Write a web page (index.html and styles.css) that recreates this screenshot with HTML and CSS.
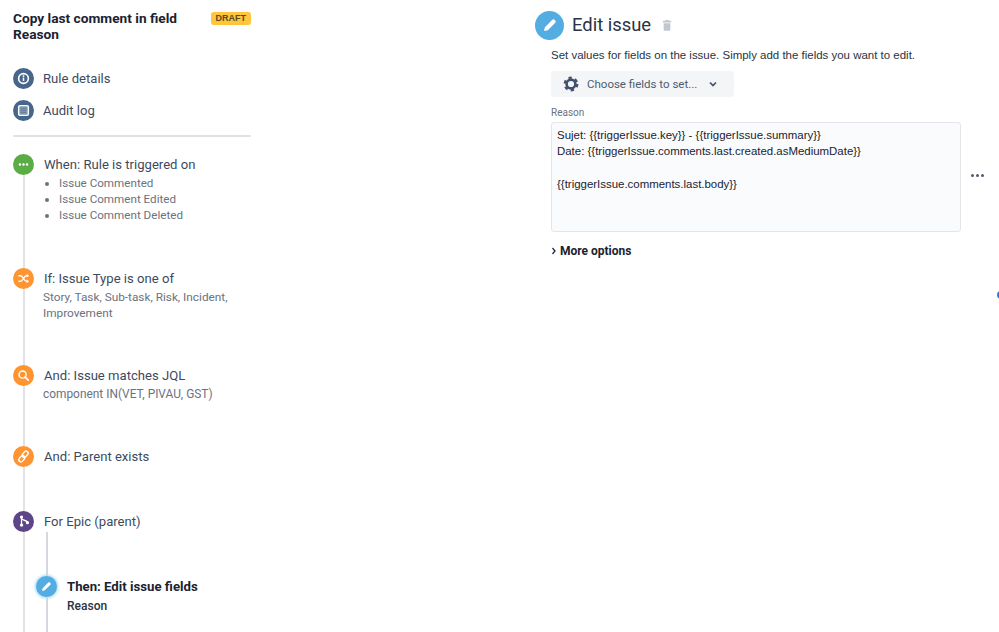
FILE: index.html
```html
<!DOCTYPE html>
<html lang="en">
<head>
<meta charset="utf-8">
<title>Copy last comment in field Reason</title>
<link rel="stylesheet" href="styles.css">
</head>
<body>
<div class="page">
  <aside class="sidebar">
    <header class="rule-head">
      <h1 class="rule-title">Copy last comment in field Reason</h1>
      <span class="lozenge">DRAFT</span>
    </header>
    <nav class="rule-nav">
      <div class="nav-item">
        <span class="dot dot-slate"><svg viewBox="0 0 16 16" class="ico"><circle cx="8" cy="8" r="5.2" fill="none" stroke="#fff" stroke-width="1.7"/><rect x="7.2" y="7" width="1.6" height="3.6" fill="#fff"/><circle cx="8" cy="5.4" r="1" fill="#fff"/></svg></span>
        <span>Rule details</span>
      </div>
      <div class="nav-item">
        <span class="dot dot-slate"><svg viewBox="0 0 16 16" class="ico"><rect x="2.800" y="2.800" width="10.400" height="10.400" rx="1.500" fill="#ffffff55" stroke="#fff" stroke-width="1.500"/><path d="M5 6h6M5 8h6M5 10h6" stroke="#46668c" stroke-width=".8" opacity=".7"/></svg></span>
        <span>Audit log</span>
      </div>
    </nav>
    <div class="timeline">
      <section class="step step-when">
        <div class="rail"><span class="dot dot-green"><svg viewBox="0 0 16 16" class="ico"><circle cx="4.200" cy="8" r="1.300" fill="#fff"/><circle cx="8" cy="8" r="1.300" fill="#fff"/><circle cx="11.800" cy="8" r="1.300" fill="#fff"/></svg></span><span class="line"></span></div>
        <div class="body">
          <div class="step-title">When: Rule is triggered on</div>
          <ul class="triggers">
            <li>Issue Commented</li>
            <li>Issue Comment Edited</li>
            <li>Issue Comment Deleted</li>
          </ul>
        </div>
      </section>
      <section class="step step-if">
        <div class="rail"><span class="dot dot-orange"><svg viewBox="0 0 16 16" class="ico"><path d="M2.500 5h2.400c2.600 0 3.600 6 6.200 6h1.600M2.500 11h2.400c2.600 0 3.600-6 6.200-6h1.600" fill="none" stroke="#fff" stroke-width="1.500"/><path d="M11.400 3l2.600 2-2.600 2zM11.400 9l2.600 2-2.600 2z" fill="#fff"/></svg></span><span class="line"></span></div>
        <div class="body">
          <div class="step-title">If: Issue Type is one of</div>
          <p class="step-sub step-sub-wrap">Story, Task, Sub-task, Risk, Incident, Improvement</p>
        </div>
      </section>
      <section class="step step-jql">
        <div class="rail"><span class="dot dot-orange"><svg viewBox="0 0 16 16" class="ico"><circle cx="7" cy="7" r="3.800" fill="none" stroke="#fff" stroke-width="1.500"/><path d="M9.800 9.800l3.200 3.200" stroke="#fff" stroke-width="2" stroke-linecap="round"/></svg></span><span class="line"></span></div>
        <div class="body">
          <div class="step-title">And: Issue matches JQL</div>
          <p class="step-sub">component IN(VET, PIVAU, GST)</p>
        </div>
      </section>
      <section class="step step-parent">
        <div class="rail"><span class="dot dot-orange"><svg viewBox="0 0 16 16" class="ico"><g fill="none" stroke="#fff" stroke-width="1.500"><rect x="7.600" y="1.900" width="4.400" height="7.400" rx="2.200" transform="rotate(40 9.800 5.600)"/><rect x="4" y="6.700" width="4.400" height="7.400" rx="2.200" transform="rotate(40 6.200 10.400)"/></g></svg></span><span class="line"></span></div>
        <div class="body">
          <div class="step-title">And: Parent exists</div>
        </div>
      </section>
      <section class="step step-branch">
        <div class="rail"><span class="dot dot-purple"><svg viewBox="0 0 16 16" class="ico"><path d="M5.900 3.300v8.200M5.900 4.500c.3 2.800 5.400 1.500 6.300 4.500" fill="none" stroke="#fff" stroke-width="1.400"/><circle cx="5.900" cy="3.300" r="1.700" fill="#fff"/><circle cx="5.900" cy="11.800" r="1.800" fill="#fff"/><circle cx="12.200" cy="9.200" r="1.700" fill="#fff"/></svg></span><span class="line"></span></div>
        <div class="body">
          <div class="step-title">For Epic (parent)</div>
          <div class="nested">
            <div class="nested-line"></div>
            <div class="step step-then">
              <div class="rail"><span class="dot dot-blue dot-active"><svg viewBox="0 0 16 16" class="ico"><path d="M3.200 12.800l.7-3 6-6a1.200 1.200 0 0 1 1.700 0l.6.6a1.200 1.200 0 0 1 0 1.700l-6 6z" fill="#fff"/></svg></span><span class="line line-thin"></span></div>
              <div class="body then-body">
                <div class="then-title">Then: Edit issue fields</div>
                <div class="then-sub">Reason</div>
              </div>
            </div>
          </div>
        </div>
      </section>
    </div>
  </aside>

  <main class="panel">
    <header class="panel-head">
      <span class="panel-icon"><svg viewBox="0 0 16 16" class="panel-ico"><path d="M3.200 12.800l.7-3 6-6a1.200 1.200 0 0 1 1.700 0l.6.6a1.200 1.200 0 0 1 0 1.700l-6 6z" fill="#fff"/></svg></span>
      <h2 class="panel-title">Edit issue</h2>
      <svg viewBox="0 0 12 14" class="trash"><path d="M4 1h4v1h3v2H1V2h3zM2 5h8v8a1 1 0 0 1-1 1H3a1 1 0 0 1-1-1z" fill="#c1c7d0"/></svg>
    </header>
    <div class="panel-body">
      <p class="panel-desc">Set values for fields on the issue. Simply add the fields you want to edit.</p>
      <div class="choose">
        <svg viewBox="0 0 16 16" class="gear"><circle cx="8" cy="8" r="4.400" fill="none" stroke="#42526e" stroke-width="2.600"/><circle cx="8" cy="8" r="6.300" fill="none" stroke="#42526e" stroke-width="2.200" stroke-dasharray="3.300 3.300"/></svg>
        <span>Choose fields to set...</span>
        <svg viewBox="0 0 10 10" class="chev"><path d="M2 3.500l3 3 3-3" fill="none" stroke="#42526e" stroke-width="1.700"/></svg>
      </div>
      <label class="field-label">Reason</label>
      <div class="field-row">
        <div class="textarea">Sujet: {{triggerIssue.key}} - {{triggerIssue.summary}}
Date: {{triggerIssue.comments.last.created.asMediumDate}}

{{triggerIssue.comments.last.body}}</div>
        <span class="more-dots"><i></i><i></i><i></i></span>
      </div>
      <div class="more-options">
        <svg viewBox="0 0 6 8" class="more-chev"><path d="M1.500 1l2.500 3-2.500 3" fill="none" stroke="#172b4d" stroke-width="1.300"/></svg>
        <span>More options</span>
      </div>
    </div>
  </main>
  <span class="edge-dot"></span>
</div>
</body>
</html>
```
FILE: styles.css
```css
* { box-sizing: border-box; }
html, body { margin: 0; padding: 0; height: 100%; overflow: hidden; background: #fff; }
body { font-family: Roboto, "Liberation Sans", sans-serif; color: #172b4d; }

.page { position: relative; display: flex; height: 632px; overflow: hidden; }

.sidebar { width: 238px; margin-left: 13px; flex: none; display: flex; flex-direction: column; }

.rule-head { display: flex; justify-content: space-between; align-items: flex-start; padding-top: 10px; }
.rule-title { margin: 0; width: 180px; font-size: 13.700px; line-height: 16px; font-weight: 700; color: #1b2230; }
.lozenge { margin-top: 2px; padding: 0 5px; height: 13px; background: #ffc53d; border-radius: 3px; color: #5a4a1c; font: 700 9px/13px "Liberation Sans", sans-serif; }

.rule-nav { margin-top: 26px; padding-bottom: 14px; border-bottom: 2px solid #dfe1e6; display: flex; flex-direction: column; gap: 11px; }
.nav-item { display: flex; align-items: center; gap: 9px; font-size: 13.100px; color: #3d4a5e; height: 21px; }

.dot { width: 21px; height: 21px; border-radius: 50%; display: flex; align-items: center; justify-content: center; flex: none; }
.ico { width: 15px; height: 15px; display: block; }
.dot-slate { background: #46668c; }
.dot-green { background: #5aac44; }
.dot-orange { background: #ff9431; }
.dot-purple { background: #5e4587; }
.dot-blue { background: #53ade2; }
.dot-active { box-shadow: 0 0 3px 1px #a9d8f5; }

.timeline { margin-top: 17px; display: flex; flex-direction: column; }
.step { display: flex; gap: 10px; }
.rail { width: 21px; flex: none; display: flex; flex-direction: column; align-items: center; }
.line { flex: 1; width: 2px; background: #e2e3e6; }
.line-thin { background: #d5d8de; }
.body { flex: 1; min-width: 0; }
.step-title { font-size: 13.100px; line-height: 21px; color: #3d4a5e; }

.step-when { height: 114px; }
.step-if { height: 97px; }
.step-jql { height: 81px; }
.step-parent { height: 65px; }
.step-branch { height: 122px; }

.triggers { margin: 0; padding: 0 0 0 15px; font-size: 11.650px; line-height: 16.200px; color: #6b7280; }
.step-sub { margin: 0; font-size: 11.800px; line-height: 16px; color: #6b7280; }
.step-if .body, .step-jql .body { margin-left: -1px; }
.step-if .step-title, .step-jql .step-title { padding-left: 1px; }
.step-sub-wrap { margin-top: 0; }
.step-jql .step-sub { margin-top: 0; font-size: 11.900px; }

.nested { margin-left: -8px; height: 101px; display: flex; flex-direction: column; }
.nested-line { width: 2px; height: 44px; margin-left: 9.500px; background: #d5d8de; }
.step-then { flex: 1; }
.then-body { padding-top: 1px; margin-left: 0; }
.then-title { font-size: 13.200px; line-height: 20px; font-weight: 700; color: #1b2230; }
.then-sub { font-size: 12px; line-height: 18px; font-weight: 500; color: #2a3342; }

.panel { margin-left: 284px; width: 464px; flex: none; }
.panel-head { display: flex; align-items: center; height: 30px; margin-top: 10px; }
.panel-icon { width: 29px; height: 29px; border-radius: 50%; background: #53ade2; display: flex; align-items: center; justify-content: center; flex: none; }
.panel-ico { width: 20px; height: 20px; display: block; }
.panel-title { margin: 0 0 0 8px; font-size: 18.400px; line-height: 30px; font-weight: 400; color: #2a3342; }
.trash { width: 10px; height: 12px; margin-left: 11px; }

.panel-body { padding-left: 16px; }
.panel-desc { margin: 7px 0 0; font: 11.470px/16px "Liberation Sans", sans-serif; color: #2a3342; }
.choose { margin-top: 8px; width: 183px; height: 26px; background: #f4f5f7; border-radius: 3px; display: flex; align-items: center; padding-left: 12px; font-size: 11.500px; color: #4f5b70; }
.gear { width: 16px; height: 16px; flex: none; }
.choose span { margin-left: 8px; }
.chev { width: 10px; height: 10px; margin-left: 11px; }
.field-label { display: block; margin-top: 9px; font-size: 10px; line-height: 14px; color: #6b7280; }
.field-row { margin-top: 2px; display: flex; align-items: center; }
.textarea { width: 410px; height: 110px; background: #fafbfd; border: 1.500px solid #e3e5e9; border-radius: 3px; padding: 4px 5px; font: 11.450px/16.400px "Liberation Sans", sans-serif; color: #1b2230; white-space: pre-wrap; }
.more-dots { display: flex; gap: 2.400px; margin-left: 9.500px; margin-top: -3px; }
.more-dots i { width: 3px; height: 3px; border-radius: 50%; background: #4f5b70; display: block; }
.more-options { margin-top: 11px; display: flex; align-items: center; gap: 3px; font-size: 12px; font-weight: 700; color: #1b2230; height: 16px; }
.more-chev { width: 6px; height: 8px; }
.edge-dot { position: absolute; left: 997px; top: 291px; width: 8px; height: 8px; border-radius: 50%; background: #3572d8; }
```
